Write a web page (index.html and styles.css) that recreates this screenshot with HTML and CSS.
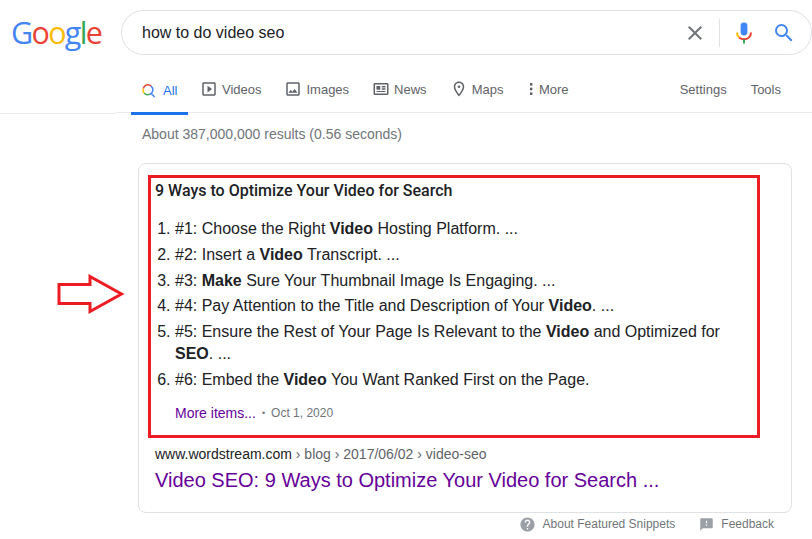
FILE: index.html
```html
<!DOCTYPE html>
<html lang="en">
<head>
  <meta charset="UTF-8" />
  <meta name="viewport" content="width=device-width, initial-scale=1.0" />
  <title>how to do video seo - Google Search</title>
  <link rel="stylesheet" href="styles.css">
</head>
<body>
  <header class="top">
    <a class="logo" href="#"><span class="blue">G</span><span class="red">o</span><span class="yellow">o</span><span class="blue">g</span><span class="green">l</span><span class="red">e</span></a>
    <div class="search">
      <span class="query">how to do video seo</span>
      <svg class="clear" viewBox="0 0 24 24" width="24" height="24"><path fill="#70757a" d="M19 6.41L17.59 5 12 10.59 6.41 5 5 6.41 10.59 12 5 17.59 6.41 19 12 13.41 17.59 19 19 17.59 13.41 12z"/></svg>
      <span class="divider"></span>
      <svg class="mic" viewBox="0 0 24 24" width="24" height="24">
        <rect x="8.6" y="1.5" width="6.8" height="13" rx="3.4" fill="#4285f4"/>
        <path d="M5 11.5c0 2 .8 3.700 2.100 4.900" fill="none" stroke="#fbbc05" stroke-width="2"/>
        <path d="M7.100 16.400c1.300 1.200 3 1.900 4.900 1.900 4 0 7-2.800 7-6.800" fill="none" stroke="#ea4335" stroke-width="2"/>
        <rect x="11" y="18.500" width="2" height="4" fill="#34a853"/>
      </svg>
      <svg class="magnify" viewBox="0 0 24 24" width="24" height="24"><path fill="#4285f4" d="M15.5 14h-.79l-.28-.27A6.471 6.471 0 0 0 16 9.5 6.5 6.5 0 1 0 9.5 16c1.610 0 3.090-.59 4.230-1.570l.27.28v.79l5 4.990L20.490 19l-4.990-5zm-6 0C7.010 14 5 11.990 5 9.500S7.010 5 9.500 5 14 7.010 14 9.500 11.990 14 9.500 14z"/></svg>
    </div>
  </header>

  <nav class="nav">
    <div class="nav-spacer"></div>
    <div class="tabs">
      <a class="tab active" href="#">
        <svg viewBox="0 0 14 14" width="14" height="14">
          <path d="M9.100 2.100A4.700 4.700 0 0 0 1.300 4.500" fill="none" stroke="#ea4335" stroke-width="1.500"/>
          <path d="M1.300 4.500A4.700 4.700 0 0 0 2.300 9.300" fill="none" stroke="#fbbc05" stroke-width="1.500"/>
          <path d="M2.300 9.300A4.700 4.700 0 0 0 7.800 10.200" fill="none" stroke="#34a853" stroke-width="1.500"/>
          <path d="M7.800 10.200A4.700 4.700 0 0 0 9.100 2.100M8.700 9l4 4" fill="none" stroke="#4285f4" stroke-width="1.500"/>
        </svg>
        All
      </a>
      <a class="tab" href="#">
        <svg viewBox="0 0 24 24" width="18" height="18"><path fill="#5f6368" d="M19 5v14H5V5h14m0-2H5c-1.100 0-2 .9-2 2v14c0 1.100.9 2 2 2h14c1.100 0 2-.9 2-2V5c0-1.100-.9-2-2-2zM10 16.500l6-4.500-6-4.500v9z"/></svg>
        Videos
      </a>
      <a class="tab" href="#">
        <svg viewBox="0 0 24 24" width="18" height="18"><path fill="#5f6368" d="M19 5v14H5V5h14m0-2H5c-1.100 0-2 .9-2 2v14c0 1.100.9 2 2 2h14c1.100 0 2-.9 2-2V5c0-1.100-.9-2-2-2zm-4.860 8.860l-3 3.870L9 13.140 6 17h12l-3.860-5.140z"/></svg>
        Images
      </a>
      <a class="tab" href="#">
        <svg viewBox="0 0 24 24" width="18" height="18"><path fill="#5f6368" d="M20 6v12H4V6h16m0-2H4c-1.100 0-2 .9-2 2v12c0 1.100.9 2 2 2h16c1.100 0 2-.9 2-2V6c0-1.100-.9-2-2-2zM6 8h5v5H6V8zm7 0h5v2h-5V8zm0 3h5v2h-5v-2zM6 14.500h12V16H6v-1.500z"/></svg>
        News
      </a>
      <a class="tab" href="#">
        <svg viewBox="0 0 24 24" width="18" height="18"><path fill="#5f6368" d="M12 2C8.130 2 5 5.130 5 9c0 5.250 7 13 7 13s7-7.750 7-13c0-3.870-3.130-7-7-7zM7 9c0-2.760 2.240-5 5-5s5 2.240 5 5c0 2.880-2.880 7.190-5 9.880C9.920 16.210 7 11.850 7 9z"/><circle cx="12" cy="9" r="1.800" fill="#5f6368"/></svg>
        Maps
      </a>
      <a class="tab tab-more" href="#">
        <svg viewBox="0 0 4 16" width="4" height="16"><g fill="#5f6368"><rect x="1" y="2" width="2.400" height="2.600"/><rect x="1" y="6.700" width="2.400" height="2.600"/><rect x="1" y="11.400" width="2.400" height="2.600"/></g></svg>
        More
      </a>
      <div class="tools">
        <a href="#">Settings</a>
        <a href="#">Tools</a>
      </div>
    </div>
  </nav>

  <main class="results">
    <p class="stats">About 387,000,000 results (0.56 seconds)</p>

    <section class="card">
      <div class="highlight">
        <h2 class="snippet-title">9 Ways to Optimize Your Video for Search</h2>
        <ol class="steps">
          <li>#1: Choose the Right <b>Video</b> Hosting Platform. ...</li>
          <li>#2: Insert a <b>Video</b> Transcript. ...</li>
          <li>#3: <b>Make</b> Sure Your Thumbnail Image Is Engaging. ...</li>
          <li>#4: Pay Attention to the Title and Description of Your <b>Video</b>. ...</li>
          <li>#5: Ensure the Rest of Your Page Is Relevant to the <b>Video</b> and Optimized for <b>SEO</b>. ...</li>
          <li>#6: Embed the <b>Video</b> You Want Ranked First on the Page.</li>
        </ol>
        <p class="more-line"><a href="#">More items...</a><span class="dot">•</span><span class="date">Oct 1, 2020</span></p>
      </div>
      <p class="crumbs">www.wordstream.com<span class="path"> › blog › 2017/06/02 › video-seo</span></p>
      <a class="result-title" href="#">Video SEO: 9 Ways to Optimize Your Video for Search ...</a>
    </section>

    <div class="snippet-foot">
      <a href="#">
        <svg viewBox="0 0 24 24" width="17" height="17"><path fill="#9aa0a6" d="M12 2C6.480 2 2 6.480 2 12s4.480 10 10 10 10-4.480 10-10S17.520 2 12 2zm1 17h-2v-2h2v2zm2.070-7.750l-.9.920C13.450 12.900 13 13.500 13 15h-2v-.5c0-1.100.45-2.100 1.170-2.830l1.240-1.260c.37-.36.59-.86.59-1.410 0-1.100-.9-2-2-2s-2 .9-2 2H8c0-2.210 1.790-4 4-4s4 1.790 4 4c0 .88-.36 1.680-.93 2.250z"/></svg>
        About Featured Snippets
      </a>
      <a href="#">
        <svg viewBox="0 0 24 24" width="15" height="15"><path fill="#9aa0a6" d="M20 2H4c-1.100 0-1.990.9-1.990 2L2 22l4-4h14c1.100 0 2-.9 2-2V4c0-1.100-.9-2-2-2zm-7 12h-2v-2h2v2zm0-4h-2V6h2v4z"/></svg>
        Feedback
      </a>
    </div>
  </main>

  <svg class="arrow" viewBox="0 0 68 42" width="68" height="42"><path d="M2 10.500h31V2.500L64.500 20 33 37.500v-8H2z" fill="#fff" stroke="#ed1c24" stroke-width="3"/></svg>
</body>
</html>
```

FILE: styles.css
```css
body {
  margin: 0;
  width: 812px;
  height: 539px;
  overflow: hidden;
  position: relative;
  font-family: "Liberation Sans", Arial, sans-serif;
  background-color: #fff;
  color: #202124;
}

a {
  text-decoration: none;
  color: inherit;
}

p {
  margin: 0;
}

.top {
  display: flex;
  align-items: flex-start;
  height: 56px;
  padding-top: 10px;
}

.logo {
  flex: none;
  width: 121px;
  padding-left: 11px;
  box-sizing: border-box;
  font-family: "Open Sans", sans-serif;
  font-size: 30.5px;
  line-height: 45px;
  letter-spacing: -1.7px;
}

.blue { color: #4285f4; }
.red { color: #ea4335; }
.yellow { color: #fbbc05; }
.green { color: #34a853; }

.search {
  display: flex;
  align-items: center;
  flex: none;
  width: 691px;
  height: 45px;
  box-sizing: border-box;
  padding: 0 15px 0 20px;
  border: 1px solid #dfe1e5;
  border-radius: 23px;
}

.query {
  flex: 1;
  font-size: 16px;
  color: #202124;
}

.clear {
  margin-right: 12px;
}

.divider {
  width: 1px;
  height: 28px;
  background-color: #dfe1e5;
  margin-right: 12px;
}

.mic {
  margin-right: 16px;
}

.nav {
  display: flex;
  align-items: flex-start;
}

.nav-spacer {
  width: 116px;
  height: 47px;
  border-bottom: 1px solid #ebebeb;
}

.tabs {
  flex: 1;
  display: flex;
  height: 46px;
  padding-left: 15px;
  border-bottom: 1px solid #ebebeb;
  font-size: 13px;
  color: #5f6368;
}

.tab {
  display: flex;
  align-items: center;
  gap: 4px;
  padding: 0 11.5px;
}

.tab.active {
  gap: 7px;
  padding: 3px 11px 0;
  color: #1a73e8;
  border-bottom: 3px solid #1a73e8;
  height: 43px;
  box-sizing: content-box;
  margin-bottom: -3px;
}

.tab-more {
  padding-left: 14px;
  gap: 6px;
}

.tools {
  margin-left: auto;
  display: flex;
  align-items: center;
  gap: 24px;
  padding-right: 31px;
}

.results {
  padding-top: 12px;
}

.stats {
  margin-left: 142px;
  font-size: 14px;
  line-height: 16px;
  color: #70757a;
}

.card {
  width: 654px;
  height: 350px;
  box-sizing: border-box;
  margin: 21px 0 0 138px;
  padding: 11px 31px 0 9px;
  border: 1px solid #dfe1e5;
  border-radius: 8px;
}

.highlight {
  height: 263px;
  box-sizing: border-box;
  padding: 3px 4px 0;
  border: 3px solid #ed1c24;
}

.snippet-title {
  margin: 0;
  font-family: Roboto, sans-serif;
  font-size: 16px;
  font-weight: 500;
  line-height: 20px;
}

.steps {
  margin: 17px 0 0;
  padding-left: 20px;
  font-size: 16px;
  line-height: 22px;
}

.steps li {
  margin-bottom: 3.8px;
}

.more-line {
  margin: 12px 0 0 20px;
  display: flex;
  align-items: center;
  line-height: 20px;
}

.more-line a {
  font-size: 14px;
  color: #609;
}

.dot {
  margin: 0 6px;
  font-size: 9px;
  color: #70757a;
}

.date {
  font-size: 12px;
  color: #70757a;
}

.crumbs {
  margin: 6px 0 0 7px;
  font-size: 14px;
  line-height: 20px;
  color: #202124;
}

.path {
  color: #5f6368;
}

.result-title {
  display: block;
  margin: 3px 0 0 7px;
  font-size: 20px;
  line-height: 26px;
  color: #609;
}

.snippet-foot {
  display: flex;
  justify-content: flex-end;
  gap: 24px;
  margin-top: 3px;
  padding-right: 38px;
  font-size: 12px;
  line-height: 17px;
  color: #70757a;
}

.snippet-foot a {
  display: flex;
  align-items: center;
  gap: 7px;
}

/* annotation drawn over the screenshot */
.arrow {
  position: absolute;
  left: 57px;
  top: 274px;
}
```
